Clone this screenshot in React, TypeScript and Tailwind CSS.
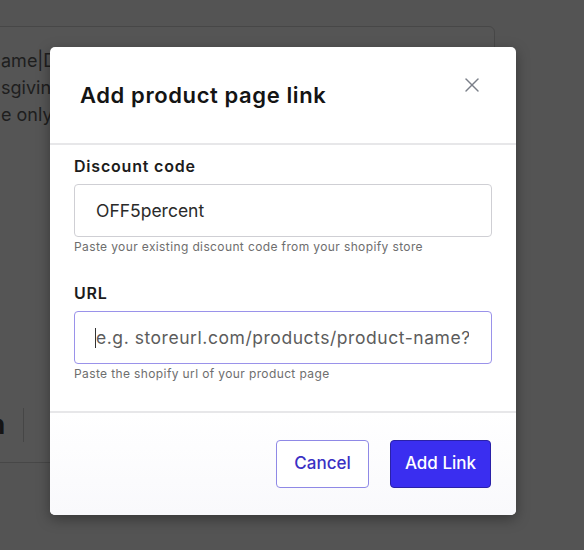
import { X } from "lucide-react";

const font = { fontFamily: "Inter, 'Noto Sans', sans-serif" };

function BackgroundPage() {
  return (
    <div className="pt-[26px] pr-[89px]">
      <div className="h-[437px] -ml-[10px] flex flex-col justify-between rounded-md border border-[#474747] bg-[#555555]">
        <div className="pt-[20px] pl-[10px] flex flex-col text-[18px] leading-[27px] text-[#1e1e1e]">
          <span>ame|Discount</span>
          <span>sgiving</span>
          <span>e only</span>
        </div>
        <div className="pb-[20px] flex items-center">
          <span className="pl-[10px] text-[26px] font-bold leading-[24px] text-[#151515] -ml-[12px]">n</span>
          <span className="ml-[18px] h-[34px] w-px bg-[#464646]" />
        </div>
      </div>
    </div>
  );
}

function Field({
  label,
  value,
  placeholder,
  hint,
  focused,
}: {
  label: string;
  value?: string;
  placeholder?: string;
  hint: string;
  focused?: boolean;
}) {
  return (
    <div className="flex flex-col">
      <label className="text-[16px] leading-[24px] font-semibold tracking-[0.8px] text-[#1c1c1c]">{label}</label>
      <div
        className={`relative mt-[6px] h-[53px] rounded-[4px] border ${
          focused ? "border-[#9a92ea] border-[1.5px]" : "border-[#cfcfd4]"
        } bg-white`}
      >
        <input
          readOnly
          value={value}
          placeholder={placeholder}
          className={`h-full w-full rounded-[4px] bg-transparent pl-[21px] pr-[22px] text-[17.5px] text-[#2a2a2a] placeholder:text-[#5c5c5c] outline-none ${
            focused ? "tracking-[0.55px]" : ""
          }`}
          style={font}
        />
        {focused && <span className="absolute left-[20px] top-[16px] h-[20px] w-px bg-[#333]" />}
      </div>
      <p className="mt-[2px] text-[12px] leading-[16px] tracking-[0.38px] text-[#6e6e6e]">{hint}</p>
    </div>
  );
}

export default function App() {
  return (
    <div className="relative h-[550px] w-[584px] overflow-hidden bg-[#545454]" style={font}>
      <BackgroundPage />

      <div className="absolute left-[50px] top-[47px] w-[466px] overflow-hidden rounded-[5px] bg-white shadow-[0_4px_14px_rgba(0,0,0,0.35)]">
        <div className="flex items-start justify-between border-b-2 border-[#e7e7e9] pl-[30px] pr-[32px] pt-[34px] pb-[34px]">
          <h2 className="text-[22px] leading-[28px] font-semibold tracking-[0.6px] text-[#141414]">Add product page link</h2>
          <button className="-mt-[8px] text-[#7a7f88]">
            <X size={24} strokeWidth={1.4} />
          </button>
        </div>

        <div className="flex flex-col gap-[26px] px-[24px] pt-[9px] pb-[29px]">
          <Field
            label="Discount code"
            value="OFF5percent"
            hint="Paste your existing discount code from your shopify store"
          />
          <Field
            label="URL"
            placeholder="e.g. storeurl.com/products/product-name?utm"
            hint="Paste the shopify url of your product page"
            focused
          />
        </div>

        <div className="flex justify-end gap-[21px] border-t-2 border-[#e7e7e9] bg-gradient-to-b from-white to-[#f9f9fc] pr-[25px] pt-[27px] pb-[27px]">
          <button className="h-[48px] w-[93px] rounded-[4px] border-[1.5px] border-[#8f89e6] bg-white text-[17px] font-medium text-[#3b30c4]">
            Cancel
          </button>
          <button className="h-[48px] w-[101px] rounded-[4px] border border-[#2a21a8] bg-[#3a2ef0] text-[17px] font-medium text-white">
            Add Link
          </button>
        </div>
      </div>
    </div>
  );
}
